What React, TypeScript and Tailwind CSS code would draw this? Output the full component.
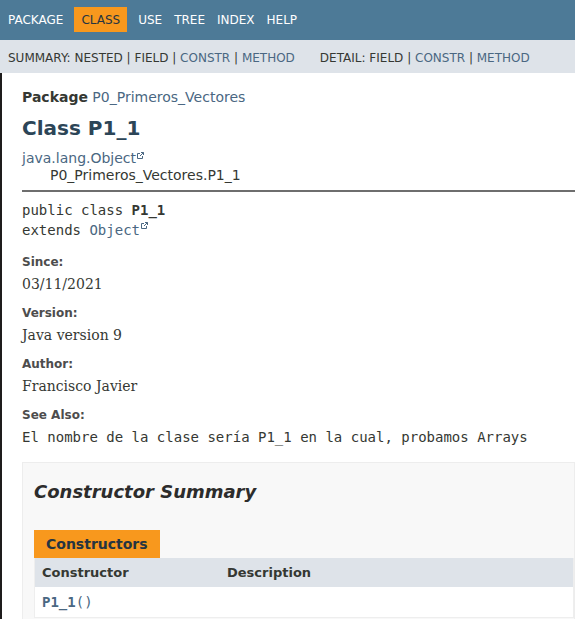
import React from 'react';

const sans = "font-['DejaVu_Sans',_'Liberation_Sans',_sans-serif]";
const mono = "font-['DejaVu_Sans_Mono',_'Liberation_Mono',_monospace]";
const serif = "font-['DejaVu_Serif',_'Liberation_Serif',_serif]";

function ExtIcon() {
  return (
    <svg width="7" height="7" viewBox="0 0 7 7" className="inline-block align-top ml-[1px] mt-[2px]">
      <path d="M0.5 1.5h2.5M0.5 1.5v5h5v-2.5" stroke="#4a6782" strokeWidth="1" fill="none" />
      <path d="M3 4l3.5-3.5M4 0.5h2.5v2.5" stroke="#4a6782" strokeWidth="1" fill="none" />
    </svg>
  );
}

function TopNav() {
  const items = ['PACKAGE', 'CLASS', 'USE', 'TREE', 'INDEX', 'HELP'];
  return (
    <div className="h-[40px] bg-[#4d7a97] flex items-center pl-[2px] pb-[1px]">
      {items.map((it) =>
        it === 'CLASS' ? (
          <span key={it} className="mx-[5px] px-[7px] h-[25px] flex items-center bg-[#f8981d] text-[#253441] text-[12px]">
            {it}
          </span>
        ) : (
          <span key={it} className="px-[6px] text-white text-[12px]">{it}</span>
        )
      )}
    </div>
  );
}

function SubNav() {
  return (
    <div className="h-[33px] bg-[#dee3e9] flex items-center pl-[8px] pt-[2px] text-[12px] text-[#353833]">
      <span>
        SUMMARY: NESTED | FIELD | <span className="text-[#4a6782]">CONSTR</span> | <span className="text-[#4a6782]">METHOD</span>
      </span>
      <span className="ml-[25px]">
        DETAIL: FIELD | <span className="text-[#4a6782]">CONSTR</span> | <span className="text-[#4a6782]">METHOD</span>
      </span>
    </div>
  );
}

function Tag({ label, children, cls }: { label: string; children: React.ReactNode; cls: string }) {
  return (
    <div>
      <div className="text-[12px] font-bold text-[#4d4d4d] leading-[16px] mt-[11px]">{label}</div>
      <div className={`${cls} text-[#353833] leading-[20px] mt-[4px] mb-[11px]`}>{children}</div>
    </div>
  );
}

export default function App() {
  return (
    <div className={`${sans} w-[575px] h-[619px] overflow-hidden bg-white text-[#353833]`}>
      <TopNav />
      <SubNav />
      <div className="flex">
        <div className="w-[2px] h-[546px] bg-[#1e1c1c] shrink-0" />
        <div className="flex-1 pl-[20px] pt-[14px]">
          <div className="text-[14px] leading-[20px]">
            <span className="font-bold">Package</span> <span className="text-[#4a6782]">P0_Primeros_Vectores</span>
          </div>
          <h1 className="text-[20px] font-bold text-[#2c4557] leading-[26px] mt-[8px]">Class P1_1</h1>
          <div className="text-[14px] leading-[17px] mt-[9px]">
            <div className="text-[#4a6782]">java.lang.Object<ExtIcon /></div>
            <div className="pl-[28px]">P0_Primeros_Vectores.P1_1</div>
          </div>
          <div className="h-[2px] bg-[#6e6e6e] mt-[6px]" />
          <div className={`${mono} text-[14px] leading-[20px] mt-[8px]`}>
            <div>public class <span className="font-bold">P1_1</span></div>
            <div>extends <span className="text-[#4a6782]">Object</span><ExtIcon /></div>
          </div>
          <div className="mt-[14px]">
            <Tag label="Since:" cls={`${serif} text-[14px]`}>03/11/2021</Tag>
            <Tag label="Version:" cls={`${serif} text-[14px]`}>Java version 9</Tag>
            <Tag label="Author:" cls={`${serif} text-[14px]`}>Francisco Javier</Tag>
            <Tag label="See Also:" cls={`${mono} text-[14px]`}>El nombre de la clase sería P1_1 en la cual, probamos Arrays</Tag>
          </div>
          <div className="mt-[15px] bg-[#f8f8f8] border border-[#ededed] pl-[11px] pt-[17px] pb-[2px]">
            <h2 className="text-[18px] font-bold italic text-[#2c2c2c] leading-[24px]">Constructor Summary</h2>
            <div className="mt-[26px]">
              <span className="inline-block bg-[#f8981d] text-[#253441] font-bold text-[14px] px-[12px] h-[28px] leading-[28px]">Constructors</span>
            </div>
            <div className="border border-[#eeeeee] border-t-0">
              <div className="flex h-[29px] items-center bg-[#dee3e9] text-[13px] font-bold text-[#353833]">
                <div className="w-[192px] pl-[7px]">Constructor</div>
                <div>Description</div>
              </div>
              <div className={`${mono} h-[30px] flex items-center pl-[7px] bg-white text-[14px] text-[#4a6782]`}>
                <span><span className="font-bold">P1_1</span>()</span>
              </div>
            </div>
          </div>
        </div>
      </div>
    </div>
  );
}
